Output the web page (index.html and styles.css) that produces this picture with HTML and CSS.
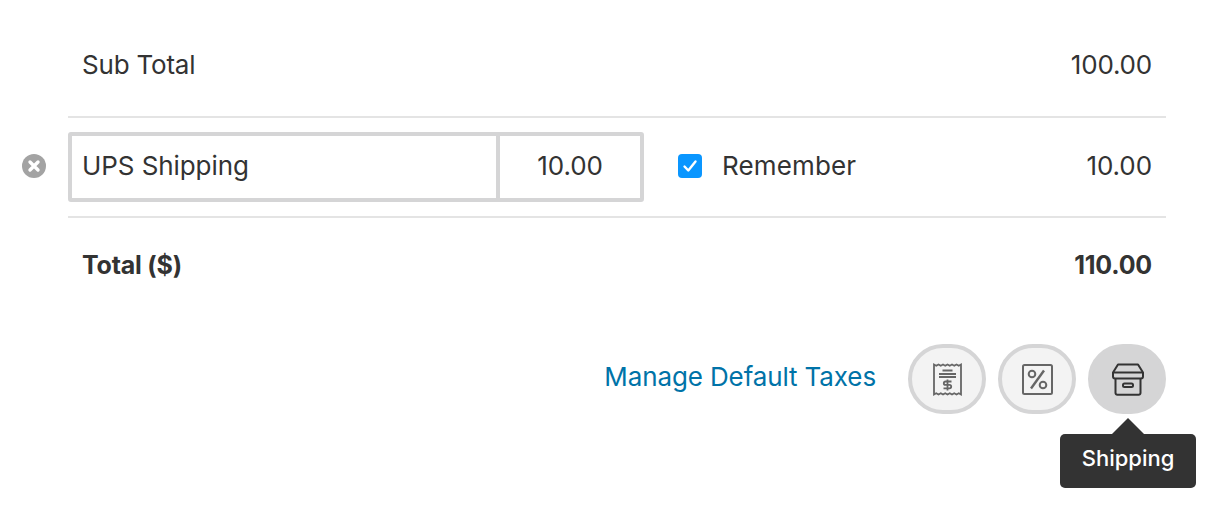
FILE: index.html
```html
<!DOCTYPE html>
<html lang="en">
<head>
<meta charset="utf-8">
<title>Totals</title>
<link rel="stylesheet" href="styles.css">
</head>
<body>
<main class="totals">
  <div class="row row-sub">
    <span class="label text">Sub Total</span>
    <span class="amount text">100.00</span>
  </div>
  <div class="row row-ship">
    <button class="remove" aria-label="Remove">
      <svg viewBox="0 0 24 24" width="24" height="24"><circle cx="12" cy="12" r="12" fill="#a3a3a3"/><path d="M8 8l8 8M16 8l-8 8" stroke="#fff" stroke-width="3.400" stroke-linecap="round"/></svg>
    </button>
    <div class="field-group">
      <div class="field-name"><span class="text">UPS Shipping</span></div>
      <div class="field-value"><span class="text">10.00</span></div>
    </div>
    <span class="check">
      <svg viewBox="0 0 24 24" width="24" height="24"><rect width="24" height="24" rx="4" fill="#0a96ff"/><path d="M6.500 12.500l3.800 4 7.200-9" fill="none" stroke="#fff" stroke-width="2.400" stroke-linecap="round" stroke-linejoin="round"/></svg>
    </span>
    <span class="remember text">Remember</span>
    <span class="amount text">10.00</span>
  </div>
  <div class="row row-total">
    <span class="label strong text">Total ($)</span>
    <span class="amount strong text">110.00</span>
  </div>
  <div class="actions">
    <a class="link" href="#">Manage Default Taxes</a>
    <button class="round" aria-label="Receipt">
      <svg viewBox="0 0 29 33" width="29" height="33" fill="none" stroke="#666" stroke-width="1.800">
        <path d="M1 1.500l2.250 1.200L5.500 1.500l2.250 1.200L10 1.500l2.250 1.200 2.250-1.200 2.250 1.200L19 1.500l2.250 1.200 2.250-1.200 2.250 1.200L28 1.500v30l-2.250-1.200-2.250 1.200-2.250-1.200-2.250 1.200-2.250-1.200-2.250 1.200-2.250-1.200L10 31.500l-2.250-1.200-2.250 1.200-2.250-1.200L1 31.500z"/>
        <path d="M9.500 7.500h10M6 11h17M6 14h17"/>
        <path d="M18.500 18.500h-6a1.700 1.700 0 0 0 0 3.400h4a1.700 1.700 0 0 1 0 3.400h-6M14.500 16.500v11"/>
      </svg>
    </button>
    <button class="round" aria-label="Discount">
      <svg viewBox="0 0 31 31" width="31" height="31" fill="none" stroke="#666" stroke-width="2">
        <rect x="1" y="1" width="29" height="29" rx="1.500"/>
        <path d="M22 6.500L9 24.500" stroke-width="2.400"/>
        <circle cx="10" cy="10" r="3.300"/>
        <circle cx="21" cy="21" r="3.300"/>
      </svg>
    </button>
    <div class="tip-anchor">
      <button class="round active" aria-label="Shipping">
        <svg class="box-icon" viewBox="0 0 32 33" width="32" height="33" fill="none" stroke="#333" stroke-width="2" stroke-linejoin="round">
          <path d="M6 1.500h20l5 8v4a2 2 0 0 1-2 2H3a2 2 0 0 1-2-2v-4z"/>
          <path d="M1.500 9.500h29"/>
          <path d="M3.500 15.500V30a1.800 1.800 0 0 0 1.800 1.800h21.400a1.800 1.800 0 0 0 1.800-1.800V15.500"/>
          <rect x="11" y="20.500" width="10" height="3.500" rx="1.500"/>
        </svg>
      </button>
      <div class="tooltip">Shipping</div>
    </div>
  </div>
</main>
</body>
</html>
```
FILE: styles.css
```css
* { box-sizing: border-box; }
html, body { margin: 0; padding: 0; background: #fff; }
body {
  width: 1219px;
  height: 514px;
  overflow: hidden;
  color: #333;
}
.totals {
  margin: 16px 53px 0 68px;
  font-family: Inter, "Open Sans", sans-serif;
  font-size: 26px;
  letter-spacing: -0.08px;
}
.text { padding-bottom: 3px; }
.row {
  display: flex;
  align-items: center;
  height: 100px;
  padding: 0 14px 0 14px;
  border-bottom: 2px solid #e4e4e4;
  position: relative;
}
.row-sub { height: 102px; }
.row-ship { padding-left: 0; }
.row-total { border-bottom: 0; height: 96px; }
.amount { margin-left: auto; }
.row-sub .text { letter-spacing: -0.2px; }
.remember { letter-spacing: 0.15px; }
.strong { font-weight: 700; font-size: 25px; letter-spacing: -0.2px; }
.remove {
  position: absolute;
  left: -46px;
  top: 36px;
  padding: 0;
  border: 0;
  background: none;
  display: flex;
}
.field-group {
  display: flex;
  width: 576px;
  height: 70px;
  border: 4px solid #d5d5d6;
  border-radius: 3px;
}
.field-name {
  flex: 1;
  display: flex;
  align-items: center;
  padding-left: 10px;
  border-right: 4px solid #d5d5d6;
}
.field-value {
  width: 140px;
  display: flex;
  align-items: center;
  justify-content: center;
}
.check { display: flex; margin-left: 34px; margin-bottom: 3px; }
.remember { margin-left: 20px; }
.actions {
  display: flex;
  align-items: center;
  justify-content: flex-end;
  gap: 12px;
  margin-top: 30px;
}
.link {
  color: #0073a8;
  text-decoration: none;
  margin-right: 20px;
  padding-bottom: 5px;
  letter-spacing: -0.12px;
}
.round {
  width: 78px;
  height: 70px;
  border-radius: 35px;
  border: 4px solid #d5d5d6;
  background: #f3f3f3;
  padding: 0;
  display: flex;
  align-items: center;
  justify-content: center;
}
.round.active { background: #d5d5d6; }
.box-icon { margin-left: 2px; }
.tip-anchor { position: relative; }
.tooltip {
  position: absolute;
  left: -28px;
  top: 90px;
  width: 136px;
  height: 54px;
  background: #333;
  color: #fff;
  border-radius: 5px;
  font-size: 22px;
  font-weight: 500;
  letter-spacing: 0;
  display: flex;
  align-items: center;
  justify-content: center;
  padding-bottom: 6px;
}
.tooltip::before {
  content: "";
  position: absolute;
  left: 52px;
  top: -16px;
  border-left: 16px solid transparent;
  border-right: 16px solid transparent;
  border-bottom: 16px solid #333;
}
```
